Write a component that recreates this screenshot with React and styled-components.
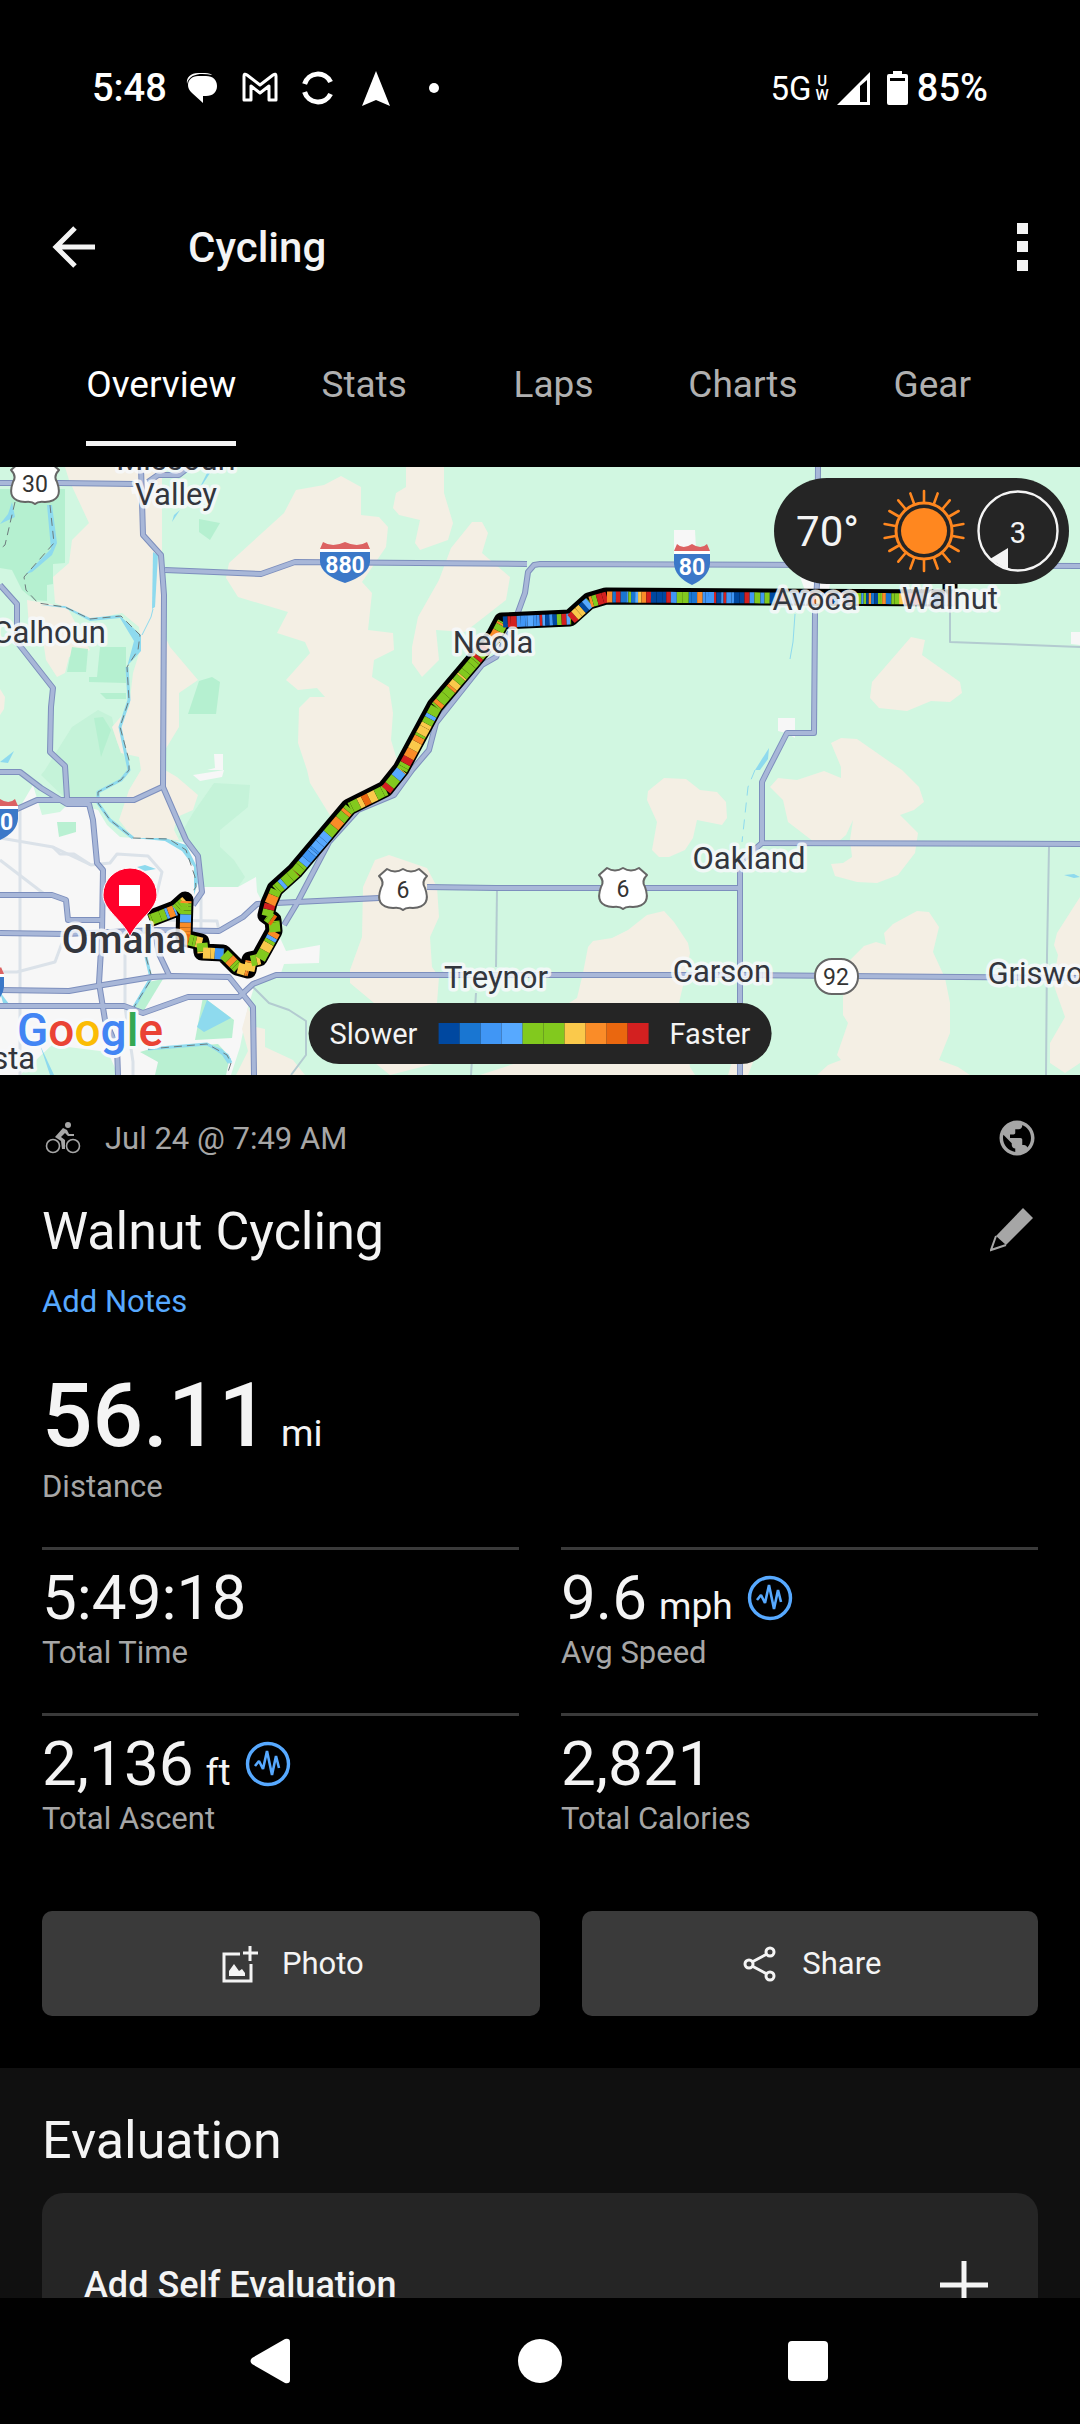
import React from 'react'
import styled, { createGlobalStyle, css } from 'styled-components'
import { MdPublic } from 'react-icons/md'

const GlobalStyle = createGlobalStyle`
  *, *::before, *::after {
    box-sizing: border-box;
  }
  body {
    margin: 0;
    background: #000;
    color: #f4f4f4;
    font-family: Roboto, 'Liberation Sans', sans-serif;
    font-size: 31px;
  }
  h1, h2, h3, p {
    margin: 0;
    font-weight: 400;
  }
  button {
    margin: 0;
    padding: 0;
    border: 0;
    background: none;
    color: inherit;
    font: inherit;
    cursor: pointer;
  }
  svg {
    display: block;
    flex: none;
  }
`

const Shell = styled.div`
  display: flex;
  flex-direction: column;
  height: 100vh;
  overflow: hidden;
`

const Scroll = styled.main`
  flex: 1;
  min-height: 0;
  overflow: hidden;
`

// Status bar
const StatusBar = styled.header`
  display: flex;
  align-items: center;
  justify-content: space-between;
  height: 176px;
  padding: 0 92px;
  color: #fff;
  font-size: 38px;
  font-weight: 500;
`

const StatusGroup = styled.div`
  display: flex;
  align-items: center;
`

const NoticeIcons = styled.div`
  display: flex;
  gap: 20px;
  margin-left: 16px;
`

const Network = styled.div`
  display: flex;
  align-items: center;
  gap: 4px;
  margin-right: 8px;
  font-family: 'Liberation Sans Narrow', Roboto, sans-serif;
  font-size: 33px;
  font-weight: 400;
`

const NetworkBand = styled.div`
  font-size: 15px;
  font-weight: 500;
  line-height: 14px;
  text-align: center;
`

const BatteryIcon = styled.svg`
  margin: 0 9px 0 17px;
`

// App bar
const AppBar = styled.div`
  display: flex;
  align-items: center;
  height: 142px;
  padding: 0 42px 0 52px;
`

const BarTitle = styled.h1`
  flex: 1;
  margin-left: 92px;
  padding-top: 2px;
  font-size: 42px;
  font-weight: 500;
  line-height: 50px;
`

const IconButton = styled.button`
  display: flex;
  align-items: center;
  justify-content: center;
`

const Tabs = styled.nav`
  display: grid;
  grid-template-columns: 8fr repeat(4, 7fr);
  justify-items: center;
  height: 149px;
  padding: 0 53px;
`

const Tab = styled.button`
  height: 128px;
  padding-top: 9px;
  border-bottom: 5px solid ${props => (props.$active ? '#f4f4f4' : 'transparent')};
  color: ${props => (props.$active ? '#fff' : '#b0b0b0')};
  font-size: 37px;
`

// Map
const MapPanel = styled.section`
  position: relative;
  height: 608px;
  overflow: hidden;
  background: #d1f7e1;
`

const MapSvg = styled.svg`
  width: 100%;
  height: 100%;
`

const overlay = css`
  position: absolute;
  display: flex;
  align-items: center;
  background: #252525;
`

const Weather = styled.div`
  ${overlay};
  top: 11px;
  right: 11px;
  height: 106px;
  padding: 0 10px 0 22px;
  border-radius: 53px;
  font-size: 42px;
`

const SunIcon = styled.svg`
  margin: 0 11px 0 23px;
`

const Legend = styled.div`
  ${overlay};
  left: 50%;
  bottom: 11px;
  height: 61px;
  padding: 0 21px;
  border-radius: 31px;
  transform: translateX(-50%);
  font-size: 29px;
`

const Scale = styled.div`
  display: flex;
  margin: 0 21px;
`

const Swatch = styled.span`
  width: 21px;
  height: 21px;
  background: ${props => props.$color};
`

// Activity summary
const Activity = styled.section`
  padding: 42px 42px 52px;
`

const MetaRow = styled.div`
  display: flex;
  align-items: center;
  height: 42px;
  color: #a6a6a6;
`

const MetaDate = styled.span`
  flex: 1;
  margin-left: 23px;
`

const TitleRow = styled.div`
  display: flex;
  align-items: center;
  justify-content: space-between;
  margin: 41px 0 18px;
`

const Heading = styled.h2`
  font-size: 52px;
  line-height: 64px;
`

const NotesLink = styled.a`
  display: block;
  width: max-content;
  color: #57a9ff;
  line-height: 40px;
  text-decoration: none;
`

const Distance = styled.div`
  margin-top: 42px;
`

const Value = styled.p`
  display: flex;
  align-items: baseline;
  height: ${props => (props.$large ? '104px' : '72px')};
  font-size: ${props => (props.$large ? '89px' : '62px')};
  font-weight: ${props => (props.$large ? 500 : 400)};
  line-height: ${props => (props.$large ? '104px' : '72px')};
`

const Unit = styled.span`
  margin-left: 12px;
  font-size: 37px;
  font-weight: 400;
  line-height: 40px;
`

const PulseIcon = styled.svg`
  align-self: center;
  margin-left: 14px;
`

const Label = styled.p`
  color: #a6a6a6;
  line-height: 38px;
`

const StatGrid = styled.div`
  display: grid;
  grid-template-columns: 1fr 1fr;
  gap: 41px 42px;
  margin-top: 41px;
`

const Stat = styled.div`
  padding-top: 12px;
  border-top: 3px solid #3a3a3a;
`

const Actions = styled.div`
  display: grid;
  grid-template-columns: 12fr 11fr;
  gap: 42px;
  margin-top: 73px;
`

const ActionButton = styled.button`
  display: flex;
  align-items: center;
  justify-content: center;
  gap: 24px;
  height: 105px;
  padding-left: 4px;
  border-radius: 10px;
  background: #3a3a3a;
`

// Evaluation
const Evaluation = styled.section`
  padding: 41px 42px 42px;
  background: #101010;
`

const EvaluationCard = styled.button`
  display: flex;
  align-items: center;
  justify-content: space-between;
  width: 100%;
  height: 184px;
  margin-top: 20px;
  padding: 0 50px 0 42px;
  border-radius: 21px;
  background: #252525;
  font-size: 36px;
  font-weight: 500;
`

const NavBar = styled.nav`
  display: flex;
  align-items: center;
  justify-content: space-between;
  flex: none;
  height: 126px;
  padding: 0 246px;
  background: #010101;
`

const legendColors = [
  '#0048a0', '#1976d2', '#4096f5', '#57a9ff', '#82c91e',
  '#82c91e', '#fac94b', '#fa8c28', '#ea670f', '#d32020',
]

const tabs = ['Overview', 'Stats', 'Laps', 'Charts', 'Gear']

const stats = [
  { label: 'Total Time', value: '5:49:18' },
  { label: 'Avg Speed', value: '9.6', unit: 'mph', pulse: true },
  { label: 'Total Ascent', value: '2,136', unit: 'ft', pulse: true },
  { label: 'Total Calories', value: '2,821' },
]

const fields = [
  '65,0 162,0 162,163 170,180 198,213 179,226 179,260 165,283 165,303 177,310 198,328 193,343 177,350 174,363 179,373 133,371 119,353 129,323 141,303 139,290 121,286 112,260 129,240 133,206 141,180 139,160 122,146 88,153 79,146 55,136 53,110 69,96 72,73 89,56 69,13',
  '341,9 361,20 361,48 379,50 388,60 386,80 362,115 372,126 368,163 393,166 394,183 374,193 372,210 389,220 393,246 391,273 400,303 386,313 344,340 331,350 310,316 307,303 298,276 299,241 310,230 325,230 317,221 298,223 286,213 310,186 305,175 277,166 288,145 238,130 226,111 229,96 284,46 296,23 324,18',
  '406,0 444,0 444,26 453,56 448,73 420,83 415,76 420,53 399,48 393,41 396,26 406,20',
  '472,55 482,55 488,66 482,86 510,110 506,133 465,165 436,163 439,193 422,210 412,196 412,180 418,150 439,113 451,81',
  '27,133 67,140 90,183 69,190 65,206 57,210 46,193 43,173 29,160',
  '911,170 925,173 922,188 960,215 962,226 950,235 931,234 907,244 879,241 870,231 872,215',
  '831,276 841,271 857,272 890,295 902,303 919,320 924,335 914,343 900,348 918,366 915,386 898,408 877,416 857,415 835,409 831,397 843,396 852,390 850,373 853,353 846,368 838,375 814,375 788,355 783,333 770,320 778,311 797,313 824,304 841,311 841,300',
  '664,311 686,312 700,323 717,325 726,335 727,351 722,358 697,353 693,371 685,383 669,390 659,390 652,383 657,355 647,333 648,324',
  '664,444 674,455 688,476 690,486 685,510 679,536 690,600 695,608 480,608 535,590 569,536 577,531 583,506 588,480 593,474 612,471 628,463 647,448',
  '917,444 929,445 939,460 933,485 945,511 950,536 950,566 939,593 958,600 970,608 817,608 828,598 841,593 837,588 848,556 843,548 843,530 850,493 864,479 876,475 886,478 884,466 893,457',
  '1080,430 1057,466 1054,478 1058,488 1053,516 1065,550 1050,576 1050,596 1065,606 1080,596',
  '375,393 389,388 427,401 437,420 439,450 430,470 432,500 439,510 437,536 437,596 390,608 375,596 374,536 350,516 350,503 362,470 363,420',
  '0,222 5,230 4,242 0,248',
]

const lowFields = [
  '248,540 256,560 265,562 265,580 293,593 305,608 236,608 248,584 242,562',
  '728,608 735,585 757,585 748,608',
]

const parks = [
  '0,22 65,22 65,96 53,97 53,117 47,118 47,134 34,133 22,123 12,103 0,101',
  '72,180 88,182 86,205 67,205',
  '100,180 126,180 126,216 89,215 89,210 97,210',
  '199,52 220,56 210,73 199,65',
  '212,210 220,215 216,247 188,247 199,214',
  '100,226 126,226 126,232 106,232',
  '94,251 103,250 111,263 101,290',
]

const lightParks = [
  '98,243 112,250 117,275 129,300 121,313 98,325 96,332 66,332 41,308 45,303 72,260',
  '214,316 250,318 248,340 220,363 220,380 234,393 245,410 238,420 200,420 196,383 179,370 193,346',
]

const cityParks = [
  '57,355 76,355 76,365 59,370',
  '148,515 163,512 143,545 134,540',
  '203,530 234,553 232,571 195,573',
  '140,585 150,582 218,577 230,590 226,608 155,608 158,595',
]

const towns = [
  '207,303 215,301 214,287 223,287 223,303',
  '674,63 695,63 696,82 674,84',
  '778,251 795,251 795,271 786,266 778,264',
  '800,110 830,117 828,128 806,126',
  '1071,165 1080,165 1080,178 1071,177',
  '193,308 224,303 222,310 200,314',
  '130,14 148,12 150,25 132,27',
]

const majorRoads = [
  '0,16 60,16 134,17',
  '148,15 158,8 179,8 188,1',
  '141,0 143,68 161,88 164,128 163,320 186,373 198,389 202,425 193,438',
  '165,103 261,107 295,95 527,97',
  '1080,99 540,97 534,98 528,105 525,126 517,148',
  '0,118 17,137 17,175 53,221 51,240 50,285 65,299 67,331',
  '510,165 496,190 482,198 436,256 429,283 412,303 394,328 358,343 329,375 296,438 284,458',
  '0,305 20,305 41,321 67,337 89,337 93,353 97,396 103,403 102,466 99,516 105,553 117,580 118,608',
  '0,352 17,342 37,333 134,333 162,320',
  '0,428 52,428 66,433 68,453 102,453',
  '0,466 65,467 157,463 219,464 243,450 257,437 276,436 379,431',
  '427,420 496,421 740,421',
  '155,466 159,487 169,508',
  '0,523 69,524 103,518 152,510 172,509 229,510 253,540 254,608',
  '0,539 124,539 143,546 188,530 239,530 253,517 276,508 740,508 1080,511',
  '818,0 817,117 815,146 814,266 787,266 768,303 762,315 762,376 1080,377',
  '762,376 740,395 740,608',
]

const minorRoads = [
  '950,117 950,175 1080,180',
  '1049,380 1047,488 1046,608',
  '497,423 496,500',
  '476,526 471,608',
  '253,520 269,536 289,543 306,554 306,588 291,608',
]

const cityRoads = [
  '0,371 53,380 91,398 110,396 117,387 148,389 162,405 156,430',
  '0,393 43,426',
  '20,343 20,608',
  '125,453 125,540 133,595 133,608',
  '0,505 17,505 55,495 62,476',
  '201,430 201,463',
  '160,453 217,454 219,464',
  '53,380 60,387 74,387 91,398',
]

const borders = [
  '15,35 5,78 0,82',
  '50,38 54,76 24,110 26,123 38,136 65,140 90,152 121,149 140,168 138,183 127,200 129,233 120,260 129,293 129,303 121,313 98,325 98,336 110,353 133,371 169,372 186,383 195,410 196,420 188,431',
  '146,490 152,511 134,540',
  '148,582 207,577 227,588 231,596 227,608',
]

const waters = [
  '47,38 52,38 57,76 52,88 32,105 26,107 51,82',
  '40,138 65,139 90,151 119,148 141,168 141,184 128,198 127,200 134,174 120,151 90,154 65,141',
  '153,85 158,88 155,140 152,142',
  '172,55 180,43 174,48',
  '197,26 210,6 207,6',
  '0,295 14,284 8,296',
  '137,400 145,398 156,402 145,404',
  '133,371 165,371 186,378 196,398 198,415 194,428 194,400 182,384 165,374',
  '207,533 231,551 204,565 197,560',
  '40,578 54,608 50,608',
  '205,576 222,582 231,592 228,597 222,588',
  '755,303 769,281 768,292 760,303',
  '0,525 9,537 3,536',
  '1064,408 1074,407 1080,410 1074,411',
  '12,35 15,50 0,57 8,47',
]

const streams = [
  '127,200 129,233 120,260 129,303 121,313 98,325 98,336 110,353 133,371',
  '146,490 151,511 134,540',
  '148,582 207,577 227,588 231,596',
]

const route = [
  [150, 453], [176, 443], [186, 434], [185, 472], [202, 476], [203, 486], [224, 487],
  [238, 501], [249, 504], [251, 494], [260, 492], [275, 465], [274, 454], [267, 449],
  [270, 437], [276, 423], [296, 405], [350, 341], [386, 323], [402, 303], [436, 240],
  [475, 194], [495, 170], [503, 155], [571, 152], [590, 135], [607, 130], [956, 132],
]

const EAST_START = 500
const westPalette = '4446442474437467448464474476473637436744967'
const eastPalette = '12990352940139221679014210379420159293691704'

const buildBands = points => {
  const bands = []
  let seed = 4211
  const next = () => {
    seed = (seed * 16807) % 2147483647
    return seed / 2147483647
  }
  points.slice(1).forEach((end, i) => {
    const start = points[i]
    const east = start[0] > EAST_START
    const length = Math.hypot(end[0] - start[0], end[1] - start[1])
    const palette = east ? eastPalette : westPalette
    let at = 0
    while (at < length) {
      const to = Math.min(length, at + 2 + next() * (east ? 4 : 8))
      const point = t => [
        start[0] + ((end[0] - start[0]) * t) / length,
        start[1] + ((end[1] - start[1]) * t) / length,
      ]
      bands.push({
        from: point(at),
        to: point(to),
        color: legendColors[Number(palette[Math.floor(next() * palette.length)])],
      })
      at = to
    }
  })
  return bands
}

const bands = buildBands(route)
const routePath = route.map(p => p.join(',')).join(' ')

const places = [
  { x: 176, y: 3, name: 'Missouri' },
  { x: 176, y: 38, name: 'Valley' },
  { x: 49, y: 176, name: 'Calhoun' },
  { x: 493, y: 186, name: 'Neola' },
  { x: 815, y: 143, name: 'Avoca' },
  { x: 950, y: 142, name: 'Walnut' },
  { x: 749, y: 402, name: 'Oakland' },
  { x: 722, y: 515, name: 'Carson' },
  { x: 496, y: 521, name: 'Treynor' },
  { x: 1048, y: 517, name: 'Griswold' },
  { x: 0, y: 602, name: 'Vista' },
]

const PlaceName = styled.text`
  fill: #33363d;
  stroke: #f7f9fb;
  stroke-width: 7px;
  stroke-linejoin: round;
  stroke-opacity: 0.85;
  paint-order: stroke;
  font-size: ${props => (props.$city ? '39px' : '31px')};
  font-weight: ${props => (props.$city ? 500 : 400)};
  text-anchor: middle;
`

const ShieldText = styled.text`
  fill: ${props => (props.$light ? '#fff' : '#333')};
  font-size: 23px;
  font-weight: ${props => (props.$light ? 700 : 400)};
  text-anchor: middle;
`

const Logo = styled.text`
  stroke: #f7f9fb;
  stroke-width: 6px;
  stroke-linejoin: round;
  paint-order: stroke;
  font-size: 46px;
  font-weight: 500;
`

const UsShield = ({ x, y, number }) => (
  <g transform={`translate(${x} ${y})`}>
    <path
      d="M-16-20Q-8-15 0-20Q8-15 16-20L24-13Q18-7 22-1Q29 18 10 19Q3 18 0 21Q-3 18-10 19Q-29 18-22-1Q-18-7-24-13Z"
      fill="#fff"
      stroke="#666"
      strokeWidth="2"
      strokeLinejoin="round"
    />
    <ShieldText y="9">{number}</ShieldText>
  </g>
)

const Interstate = ({ x, y, half, number }) => (
  <g transform={`translate(${x} ${y})`}>
    <path
      d={`M${-half}-13L${-half + 3}-20Q${-half / 2}-14 0-20Q${half / 2}-14 ${half - 3}-20L${half}-13Z`}
      fill="#dc6262"
    />
    <path d={`M${-half}-13H${half}V-10H${-half}Z`} fill="#fff" />
    <path d={`M${-half}-10H${half}V0Q${half - 1} 13 0 21Q${-half + 1} 13 ${-half} 0Z`} fill="#3b78c8" />
    <ShieldText $light y="11">
      {number}
    </ShieldText>
  </g>
)

const Polygons = ({ list, fill }) => list.map(points => <polygon key={points} points={points} fill={fill} />)

const Lines = ({ list, color, width, dash }) =>
  list.map(points => (
    <polyline
      key={points}
      points={points}
      fill="none"
      stroke={color}
      strokeWidth={width}
      strokeDasharray={dash}
      strokeLinejoin="round"
    />
  ))

const RouteMap = () => (
  <MapSvg viewBox="0 0 1080 608" preserveAspectRatio="xMidYMid slice" role="img" aria-label="Ride map">
    <rect width="1080" height="608" fill="#d1f7e1" />
    <Polygons list={lightParks} fill="#c5f3d9" />
    <polygon
      points="0,338 20,340 33,318 42,348 60,345 70,335 98,343 107,358 120,370 183,375 197,392 200,420 238,420 256,410 257,425 276,462 286,484 320,478 319,496 284,497 281,506 255,517 248,540 240,580 231,608 118,608 108,585 52,578 20,608 0,608"
      fill="#f7f7f7"
    />
    <Polygons list={fields} fill="#f4efe4" />
    <Polygons list={lowFields} fill="#f4efe4" />
    <Polygons list={parks} fill="#b5f0d0" />
    <Polygons list={cityParks} fill="#b9f0d2" />
    <Polygons list={towns} fill="#f7f7f7" />
    <Polygons list={waters} fill="#8edaee" />
    <Lines list={streams} color="#8edaee" width="3" />
    <Lines list={['153,142 151,150 142,168', '795,147 793,175 790,192']} color="#8edaee" width="1" />
    <Lines list={['755,303 748,320 742,375']} color="#8edaee" width="1" dash="10 7" />
    <Lines list={cityRoads} color="#dbe2e9" width="3" />
    <Lines list={minorRoads} color="#b3cbd0" width="2" />
    <Lines list={borders} color="#6d7b7d" width="1" dash="8 5" />
    <Lines list={majorRoads} color="#7d8fbd" width="6" />
    <Lines list={majorRoads} color="#a8b7d8" width="4" />

    <UsShield x={35} y={16} number="30" />
    <UsShield x={403} y={422} number="6" />
    <UsShield x={623} y={421} number="6" />
    <Interstate x={345} y={95} half={25} number="880" />
    <Interstate x={692} y={97} half={18} number="80" />
    <Interstate x={0} y={352} half={18} number="80" />
    <Interstate x={-14} y={520} half={18} number="80" />
    <rect x="815" y="492" width="43" height="35" rx="17" fill="#fff" stroke="#666" strokeWidth="2" />
    <ShieldText x="836" y="518">
      92
    </ShieldText>

    <polyline
      points={routePath}
      transform="translate(-1 -1)"
      fill="none"
      stroke="#000"
      strokeWidth="17"
      strokeLinejoin="round"
    />
    {bands.map(({ from, to, color }) => (
      <line
        key={from.join()}
        x1={from[0]}
        y1={from[1]}
        x2={to[0]}
        y2={to[1]}
        stroke={color}
        strokeWidth="11"
      />
    ))}
    <path d="M944 113V122M956 113V122" stroke="#000" strokeWidth="3" />

    {places.map(({ x, y, name }) => (
      <PlaceName key={name} x={x} y={y}>
        {name}
      </PlaceName>
    ))}
    <PlaceName $city x="124" y="486">
      Omaha
    </PlaceName>
    <path
      d="M130 470C124 454 103 443 103 428A27 27 0 0 1 157 428C157 443 136 454 130 470Z"
      fill="#ff0029"
      stroke="#fff"
      strokeWidth="1"
    />
    <rect x="119" y="418" width="21" height="21" fill="#fff" />
    <Logo x="17" y="579">
      <tspan fill="#4285f4">G</tspan>
      <tspan fill="#ea4335">o</tspan>
      <tspan fill="#fbbc05">o</tspan>
      <tspan fill="#4285f4">g</tspan>
      <tspan fill="#34a853">l</tspan>
      <tspan fill="#ea4335">e</tspan>
    </Logo>
  </MapSvg>
)

const rays = Array.from({ length: 18 }, (_, i) => i * 20)

const Sun = () => (
  <SunIcon width="84" height="84" viewBox="-42 -42 84 84" fill="none" stroke="#ff871f" strokeLinecap="round">
    <circle r="23" fill="#ff871f" stroke="none" />
    <circle r="28" strokeWidth="3" />
    {rays.map(angle => (
      <path key={angle} d="M0-29V-40" strokeWidth="2.6" transform={`rotate(${angle})`} />
    ))}
  </SunIcon>
)

const Wind = () => (
  <svg width="82" height="82" viewBox="-41 -41 82 82">
    <circle r="39.5" fill="none" stroke="#f4f4f4" strokeWidth="2.4" />
    <path d="M-28 28L-10 17V39Z" fill="#f4f4f4" />
    <text y="12" fill="#f4f4f4" fontSize="29" textAnchor="middle">
      3
    </text>
  </svg>
)

const Pulse = () => (
  <PulseIcon width="46" height="46" viewBox="0 0 46 46" fill="none" stroke="#57a9ff">
    <circle cx="23" cy="23" r="20.5" strokeWidth="3.4" />
    <path d="M10 25L14 20L18 28L22 10L27 34L31 15L34 27" strokeWidth="2.6" strokeLinejoin="bevel" />
  </PulseIcon>
)

const App = () => (
  <Shell>
    <GlobalStyle />
    <StatusBar>
      <StatusGroup>
        <span>5:48</span>
        <NoticeIcons>
          <svg width="38" height="38" viewBox="0 0 38 38" fill="#fff">
            <path d="M15 7H23C30 7 34 11 34 17S30 27 23 27H20V34L9 24C6 21 5 19 5 16C5 11 9 7 15 7Z" />
            <path d="M4 15C3 8 8 4 15 4H22C26 4 28 5 29 6C19 4 6 4 4 15Z" />
          </svg>
          <svg width="38" height="38" viewBox="0 0 38 38" fill="none" stroke="#fff" strokeWidth="3" strokeLinejoin="round">
            <path d="M3 31V7Q3 4 6 6L19 16L32 6Q35 4 35 7V31H28V17L19 24L10 17V31Z" />
          </svg>
          <svg width="38" height="38" viewBox="0 0 38 38" fill="none" stroke="#fff" strokeWidth="5">
            <path d="M5.6 15A14 14 0 0 1 31.6 13M5.6 23A14 14 0 0 0 31.6 25" />
          </svg>
          <svg width="38" height="38" viewBox="0 0 38 38" fill="#fff">
            <path d="M19 2L33 37L19 31L5 37Z" />
          </svg>
          <svg width="38" height="38" viewBox="0 0 38 38" fill="#fff">
            <circle cx="19" cy="19" r="5" />
          </svg>
        </NoticeIcons>
      </StatusGroup>
      <StatusGroup>
        <Network>
          <span>5G</span>
          <NetworkBand>
            U<br />W
          </NetworkBand>
        </Network>
        <svg width="33" height="33" viewBox="0 0 33 33">
          <path d="M33 0V33H0Z" fill="#fff" />
          <path d="M23 14L30 8V30H23Z" fill="#000" />
        </svg>
        <BatteryIcon width="21" height="35" viewBox="0 0 21 35">
          <path d="M6 0H15V3H19Q21 3 21 5V32Q21 34 19 34H2Q0 34 0 32V5Q0 3 2 3H6Z" fill="#fff" />
          <path d="M3 7H18V10H3Z" fill="#000" />
        </BatteryIcon>
        <span>85%</span>
      </StatusGroup>
    </StatusBar>

    <AppBar>
      <IconButton aria-label="Back">
        <svg width="44" height="44" viewBox="0 0 44 44" fill="none" stroke="#f4f4f4" strokeWidth="5">
          <path d="M43 22H5M23 3L4 22L23 41" />
        </svg>
      </IconButton>
      <BarTitle>Cycling</BarTitle>
      <IconButton aria-label="More options">
        <svg width="32" height="50" viewBox="0 0 32 50" fill="#f4f4f4">
          <path d="M11 1H22V12H11ZM11 19H22V30H11ZM11 38H22V49H11Z" />
        </svg>
      </IconButton>
    </AppBar>

    <Tabs>
      {tabs.map((name, i) => (
        <Tab key={name} $active={i === 0}>
          {name}
        </Tab>
      ))}
    </Tabs>

    <Scroll>
      <MapPanel>
        <RouteMap />
        <Weather>
          <span>70°</span>
          <Sun />
          <Wind />
        </Weather>
        <Legend>
          <span>Slower</span>
          <Scale>
            {legendColors.map((color, i) => (
              <Swatch key={i} $color={color} />
            ))}
          </Scale>
          <span>Faster</span>
        </Legend>
      </MapPanel>

      <Activity>
        <MetaRow>
          <svg width="40" height="36" viewBox="0 0 40 36" fill="none" stroke="#a6a6a6" strokeWidth="1.6">
            <circle cx="11" cy="26" r="6.5" />
            <circle cx="31" cy="26" r="6.5" />
            <circle cx="26" cy="5" r="3" fill="#a6a6a6" stroke="none" />
            <path
              d="M21 8L25 10L27 14H32V16H26L23 13L19 17L23 20V29H20L19 21L13 17Z"
              fill="#a6a6a6"
              stroke="none"
            />
          </svg>
          <MetaDate>Jul 24 @ 7:49 AM</MetaDate>
          <MdPublic size={42} />
        </MetaRow>
        <TitleRow>
          <Heading>Walnut Cycling</Heading>
          <IconButton aria-label="Edit name">
            <svg width="48" height="48" viewBox="0 0 48 48" fill="#a6a6a6">
              <path d="M33 0L43 10L16 37L6 28Z" />
              <path d="M6 28L1 42L16 37" fill="none" stroke="#a6a6a6" strokeWidth="2" />
            </svg>
          </IconButton>
        </TitleRow>
        <NotesLink href="#notes">Add Notes</NotesLink>

        <Distance>
          <Value $large>
            56.11<Unit>mi</Unit>
          </Value>
          <Label>Distance</Label>
        </Distance>

        <StatGrid>
          {stats.map(({ label, value, unit, pulse }) => (
            <Stat key={label}>
              <Value>
                {value}
                {unit ? <Unit>{unit}</Unit> : null}
                {pulse ? <Pulse /> : null}
              </Value>
              <Label>{label}</Label>
            </Stat>
          ))}
        </StatGrid>

        <Actions>
          <ActionButton>
            <svg width="36" height="38" viewBox="0 0 36 38" fill="none" stroke="#f4f4f4" strokeWidth="3">
              <path d="M18 9H2V36H29V19M28 1V16M21 8H36" />
              <path d="M7 31V26L12 19L17 26L20 24L23 28V31Z" fill="#f4f4f4" stroke="none" />
            </svg>
            Photo
          </ActionButton>
          <ActionButton>
            <svg width="36" height="38" viewBox="0 0 36 38" fill="none" stroke="#f4f4f4" strokeWidth="3">
              <circle cx="7" cy="19" r="4" />
              <circle cx="28" cy="7" r="4" />
              <circle cx="28" cy="31" r="4" />
              <path d="M10 17L25 9M10 21L25 29" />
            </svg>
            Share
          </ActionButton>
        </Actions>
      </Activity>

      <Evaluation>
        <Heading>Evaluation</Heading>
        <EvaluationCard>
          Add Self Evaluation
          <svg width="48" height="48" viewBox="0 0 48 48" fill="none" stroke="#f4f4f4" strokeWidth="5">
            <path d="M24 0V48M0 24H48" />
          </svg>
        </EvaluationCard>
      </Evaluation>
    </Scroll>

    <NavBar>
      <IconButton aria-label="System back">
        <svg width="48" height="46" viewBox="0 0 48 46" fill="#fff">
          <path d="M39 1Q44 0 44 4V42Q44 46 39 45L6 26Q3 23 6 20Z" />
        </svg>
      </IconButton>
      <IconButton aria-label="Home">
        <svg width="46" height="46" viewBox="0 0 46 46" fill="#fff">
          <circle cx="23" cy="23" r="22" />
        </svg>
      </IconButton>
      <IconButton aria-label="Recent apps">
        <svg width="48" height="46" viewBox="0 0 48 46" fill="#fff">
          <rect x="2" y="3" width="40" height="40" rx="4" />
        </svg>
      </IconButton>
    </NavBar>
  </Shell>
)

export default App
